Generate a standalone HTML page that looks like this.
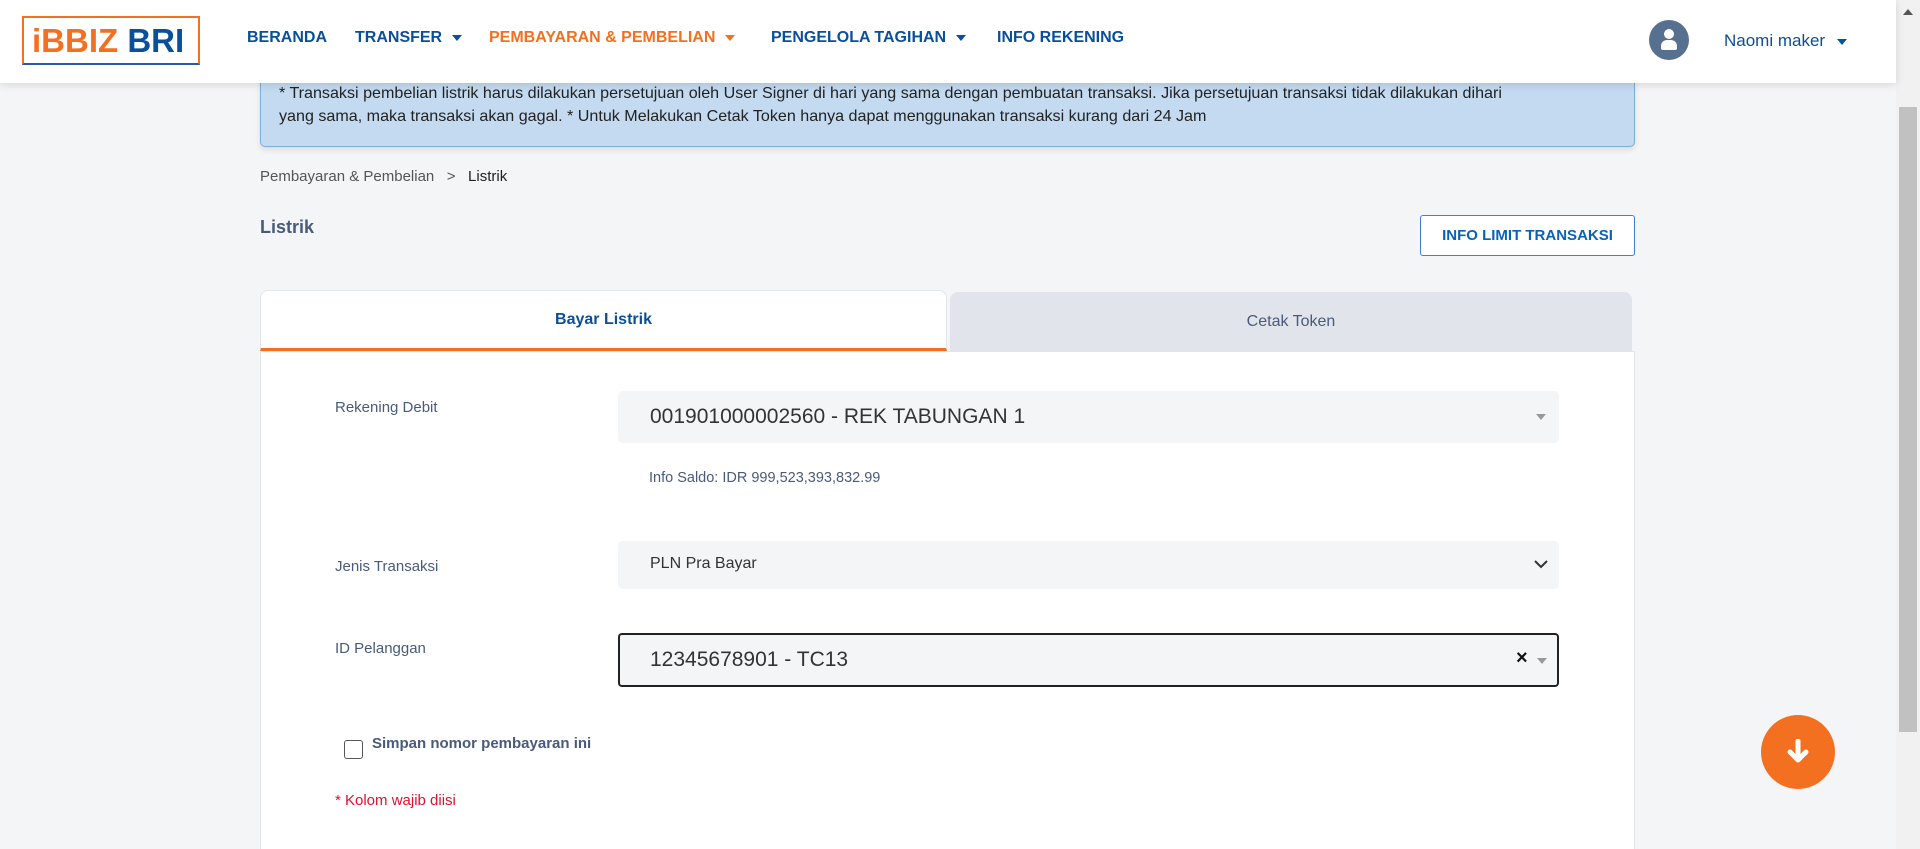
<!DOCTYPE html>
<html><head><meta charset="utf-8"><style>
*{box-sizing:border-box;margin:0;padding:0}
html,body{width:1920px;height:849px;overflow:hidden}
body{background:#f4f5f7;font-family:"Liberation Sans",sans-serif;position:relative}
.abs{position:absolute}
.nav{left:0;top:0;width:1896px;height:83px;background:#fff;box-shadow:0 2px 8px rgba(0,0,0,.12);z-index:5}
.logo{left:22px;top:16px;width:178px;height:49px;border:2px solid #f37021;border-bottom-color:#2a5aa8;background:#fff;font-weight:bold;font-size:33px;line-height:45px;padding-left:8px;white-space:nowrap;overflow:hidden}
.nl{top:29px;font-size:16px;font-weight:bold;color:#0a4f9a;white-space:nowrap}
.caret{display:inline-block;width:0;height:0;border-left:5px solid transparent;border-right:5px solid transparent;border-top:6px solid currentColor;vertical-align:middle;margin-left:10px}
.alert{left:260px;top:60px;width:1375px;height:87px;background:#c3daf0;border:1px solid #7ab0e0;border-radius:0 0 5px 5px;font-size:16.1px;color:#222;padding:21px 115px 0 18px;line-height:23px;box-shadow:0 3px 6px rgba(0,0,0,.1)}
.lbl{font-size:15px;color:#4a5a7a}
.sel{background:#f4f5f7;border-radius:5px}
.dd{width:0;height:0;border-left:5px solid transparent;border-right:5px solid transparent;border-top:6px solid #999}
</style></head><body>
<div class="abs nav">
 <div class="abs logo"><span style="color:#f37021">iBBIZ</span> <span style="color:#0a4f9a">BRI</span></div>
 <div class="abs nl" style="left:247px">BERANDA</div>
 <div class="abs nl" style="left:355px">TRANSFER<span class="caret"></span></div>
 <div class="abs nl" style="left:489px;color:#f37021">PEMBAYARAN &amp; PEMBELIAN<span class="caret"></span></div>
 <div class="abs nl" style="left:771px">PENGELOLA TAGIHAN<span class="caret"></span></div>
 <div class="abs nl" style="left:997px">INFO REKENING</div>
 <div class="abs" style="left:1649px;top:20px;width:40px;height:40px;border-radius:50%;background:#58708f">
  <div class="abs" style="left:15px;top:9px;width:10px;height:10px;border-radius:50%;background:#fff"></div>
  <div class="abs" style="left:12px;top:20px;width:16px;height:10px;border-radius:6px 6px 2px 2px;background:#fff"></div>
 </div>
 <div class="abs" style="left:1724px;top:31px;font-size:17px;color:#0a4f9a;white-space:nowrap">Naomi maker<span class="caret" style="margin-left:12px"></span></div>
</div>
<div class="abs" style="left:1896px;top:0;width:24px;height:849px;background:#f1f1f1"><div class="abs" style="left:7px;top:9px;width:0;height:0;border-left:5px solid transparent;border-right:5px solid transparent;border-bottom:6px solid #555"></div><div class="abs" style="left:3px;top:107px;width:18px;height:625px;background:#c1c1c1"></div></div>
<div class="abs alert">* Transaksi pembelian listrik harus dilakukan persetujuan oleh User Signer di hari yang sama dengan pembuatan transaksi. Jika persetujuan transaksi tidak dilakukan dihari yang sama, maka transaksi akan gagal. * Untuk Melakukan Cetak Token hanya dapat menggunakan transaksi kurang dari 24 Jam</div>
<div class="abs" style="left:260px;top:168px;font-size:15px;color:#555">Pembayaran &amp; Pembelian &nbsp;&nbsp;&gt;&nbsp;&nbsp; <span style="color:#222">Listrik</span></div>
<div class="abs" style="left:260px;top:217px;font-size:18px;font-weight:bold;color:#4a5a7a">Listrik</div>
<div class="abs" style="left:1420px;top:215px;width:215px;height:41px;border:1px solid #3b82d6;border-radius:3px;background:#fff;color:#0a62b5;font-weight:bold;font-size:15px;text-align:center;line-height:39px">INFO LIMIT TRANSAKSI</div>
<div class="abs" style="left:260px;top:351px;width:1375px;height:510px;background:#fff;border:1px solid #e3e5ea"></div>
<div class="abs" style="left:260px;top:290px;width:687px;height:61px;background:#fff;border:1px solid #e3e5ea;border-bottom:3px solid #f37021;border-radius:8px 8px 0 0;text-align:center;line-height:58px;font-weight:bold;font-size:16px;color:#0a4f9a">Bayar Listrik</div>
<div class="abs" style="left:950px;top:292px;width:682px;height:59px;background:#e1e4ea;border-radius:8px 8px 0 0;text-align:center;line-height:59px;font-size:16px;color:#4a5a7a">Cetak Token</div>
<div class="abs lbl" style="left:335px;top:399px">Rekening Debit</div>
<div class="abs sel" style="left:618px;top:391px;width:941px;height:52px"><div class="abs" style="left:32px;top:14px;font-size:21px;color:#333">001901000002560 - REK TABUNGAN 1</div><div class="abs dd" style="left:918px;top:23px"></div></div>
<div class="abs lbl" style="left:649px;top:470px;font-size:14.5px">Info Saldo: IDR 999,523,393,832.99</div>
<div class="abs lbl" style="left:335px;top:558px">Jenis Transaksi</div>
<div class="abs sel" style="left:618px;top:541px;width:941px;height:48px"><div class="abs" style="left:32px;top:14px;font-size:16px;color:#333">PLN Pra Bayar</div>
<svg class="abs" style="left:916px;top:18px" width="14" height="10" viewBox="0 0 14 10"><path d="M1 2l6 6 6-6" fill="none" stroke="#333" stroke-width="2"/></svg></div>
<div class="abs lbl" style="left:335px;top:640px">ID Pelanggan</div>
<div class="abs" style="left:618px;top:633px;width:941px;height:54px;border:2px solid #222;border-radius:4px;background:#f4f5f7"><div class="abs" style="left:30px;top:13px;font-size:21px;color:#333">12345678901 - TC13</div><div class="abs" style="left:896px;top:12px;font-size:20px;font-weight:bold;color:#111">×</div><div class="abs dd" style="left:917px;top:23px"></div></div>
<div class="abs" style="left:344px;top:740px;width:19px;height:19px;border:1.5px solid #555;border-radius:3px;background:#fff"></div>
<div class="abs" style="left:372px;top:735px;font-size:15px;font-weight:bold;color:#4a5a7a">Simpan nomor pembayaran ini</div>
<div class="abs" style="left:335px;top:792px;font-size:15px;color:#e0102a">* Kolom wajib diisi</div>
<div class="abs" style="left:1761px;top:715px;width:74px;height:74px;border-radius:50%;background:#f37021">
<svg class="abs" style="left:25px;top:24px" width="24" height="26" viewBox="0 0 24 26"><path d="M12 2v18M4 13l8 8 8-8" fill="none" stroke="#fff" stroke-width="5" stroke-linecap="round" stroke-linejoin="round"/></svg></div>
</body></html>
